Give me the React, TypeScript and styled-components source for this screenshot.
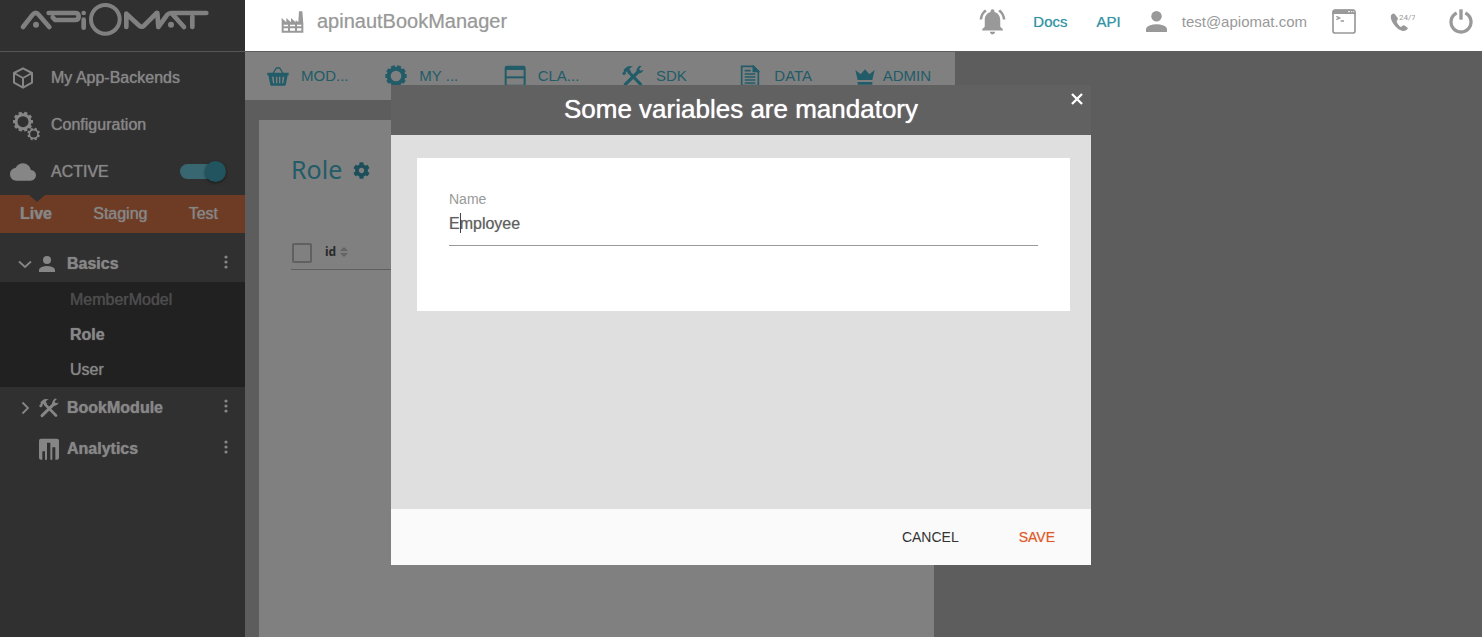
import React from "react";
import styled, { createGlobalStyle } from "styled-components";
import { MdCloud, MdNotificationsActive } from "react-icons/md";
import { FaCog } from "react-icons/fa";

const sans = `"Liberation Sans", Arial, sans-serif`;
const teal = "#225c68";

const GlobalStyle = createGlobalStyle`
  * { box-sizing: border-box; }
  body { margin: 0; background: #5d5d5d; font-family: ${sans}; }
  button, input { font-family: inherit; margin: 0; }
  a { color: inherit; text-decoration: none; }
  svg { display: block; flex: none; }
`;

/* ---------- icons ---------- */

const Logo = () => (
  <svg width="250" height="50" viewBox="0 0 750 150" fill="none" stroke="#808080" strokeWidth="14" strokeLinecap="round" strokeLinejoin="round" role="img" aria-label="ApiOmat">
    <path d="M69 81L98 44Q107 33 116 44L148 81" />
    <path d="M146 39H226Q236 39 236 49Q236 60 226 60H166L158 52" />
    <path d="M251 59V83" />
    <circle cx="251" cy="39" r="7" fill="#808080" stroke="none" />
    <circle cx="316" cy="58" r="43" strokeWidth="12" />
    <path d="M379 81V41L418 77Q425 83 432 77L470 39" />
    <path d="M472 39L475 81L502 44Q506 39 514 39H619" />
    <path d="M516 41L552 81M577 50V81" />
    <circle cx="108" cy="74" r="9" fill="#808080" stroke="none" />
    <circle cx="513" cy="74" r="9" fill="#808080" stroke="none" />
  </svg>
);

const CubeIcon = () => (
  <svg width="22" height="22" viewBox="0 0 66 66" fill="none" stroke="currentColor" strokeWidth="6" strokeLinejoin="round">
    <path d="M33 4L60 18V47L33 62L6 47V18ZM6 18L33 33L60 18M33 33V62" />
  </svg>
);

const teeth = (cx: number, cy: number, r: number, size: number, count: number) =>
  Array.from({ length: count }, (_, i) => (
    <rect
      key={i}
      x={cx - size / 2}
      y={cy - r}
      width={size}
      height={size}
      rx="1"
      fill="currentColor"
      stroke="none"
      transform={`rotate(${(360 / count) * (i + 0.5)} ${cx} ${cy})`}
    />
  ));

const GearsIcon = () => (
  <svg width="28" height="30" viewBox="0 0 84 90" fill="none" stroke="currentColor" overflow="visible">
    <circle cx="42" cy="35" r="21" strokeWidth="9" />
    {teeth(42, 35, 30, 10, 10)}
    <circle cx="74" cy="72" r="13" strokeWidth="5" />
    {teeth(74, 72, 19, 7, 8)}
  </svg>
);

const GearIcon = () => (
  <svg width="22" height="22" viewBox="0 0 66 66" fill="none" stroke="currentColor">
    <circle cx="33" cy="33" r="22" strokeWidth="12" />
    {teeth(33, 33, 32, 12, 10)}
  </svg>
);

const ToolsIcon = ({ size }: { size: number }) => (
  <svg width={size} height={size} viewBox="0 0 66 66" fill="none" stroke="currentColor">
    <path d="M0 26L6 31L12 26L11 22L15 19L22 24L27 19L22 13Q25 6 33 5Q20 0 11 8L5 14L6 19Z" fill="currentColor" stroke="none" />
    <path d="M20 21L56 58" strokeWidth="9" strokeLinecap="round" />
    <path d="M10 58L48 21" strokeWidth="10" strokeLinecap="round" />
    <path d="M52 2L46 9Q41 17 44 23Q52 28 60 22L65 15L56 17L51 12L59 3Z" fill="currentColor" stroke="none" />
  </svg>
);

const PersonIcon = ({ size }: { size: number }) => (
  <svg width={size} height={size} viewBox="0 0 48 48" fill="currentColor">
    <circle cx="24" cy="12" r="12" />
    <path d="M0 48V42Q0 36 8 33Q24 27 40 33Q48 36 48 42V48Z" />
  </svg>
);

const ChevronIcon = ({ open }: { open?: boolean }) => (
  <svg width="16" height="16" viewBox="0 0 16 16" fill="none" stroke="currentColor" strokeWidth="1.8">
    <path d={open ? "M2 5.5L8 11L14 5.5" : "M5.5 2.5L11 8L5.5 13.5"} />
  </svg>
);

const ChartIcon = () => (
  <svg width="20" height="22" viewBox="0 0 60 66">
    <path fill="currentColor" fillRule="evenodd" d="M6 2H54Q60 2 60 8V59Q60 65 54 65H49V28H40V65H34V14H24V65H18V40H10V65H6Q0 65 0 59V8Q0 2 6 2Z" />
  </svg>
);

const DotsIcon = () => (
  <svg width="4" height="14" viewBox="0 0 4 14" fill="currentColor">
    <circle cx="2" cy="2" r="1.6" />
    <circle cx="2" cy="7" r="1.6" />
    <circle cx="2" cy="12" r="1.6" />
  </svg>
);

const FactoryIcon = () => (
  <svg width="23" height="22" viewBox="0 0 69 66">
    <path fill="currentColor" fillRule="evenodd" d="M2 65V21L16 34V21L30 34V21L44 34V28L52 33L54 1H64L67 38V65ZM8 41V46H21V41ZM27 41V46H42V41ZM48 41V46H61V41ZM8 52V59H21V52ZM27 52V59H42V52ZM48 52V59H61V52Z" />
  </svg>
);

const BasketIcon = () => (
  <svg width="22" height="20" viewBox="0 0 66 60" fill="none" stroke="currentColor">
    <path d="M17 24L28 6H38L49 24" strokeWidth="4" />
    <path fill="currentColor" stroke="none" fillRule="evenodd" d="M1 20H65V28H62L56 57Q55 59 53 59H13Q11 59 10 57L4 28H1ZM15 32L18 52H22L20 32ZM27 32V52H31V32ZM36 32V52H40V32ZM47 32L45 52H49L52 32Z" />
  </svg>
);

const ClassIcon = () => (
  <svg width="22" height="22" viewBox="0 0 66 66" fill="none" stroke="currentColor" strokeWidth="6">
    <rect x="5" y="5" width="57" height="57" rx="4" />
    <path d="M5 37H62" />
    <path d="M5 10H62" strokeWidth="10" />
  </svg>
);

const DocIcon = () => (
  <svg width="20" height="22" viewBox="0 0 60 66" fill="none" stroke="currentColor" strokeWidth="5">
    <path d="M5 4H40L55 19V62H5ZM14 17H32M14 27H46M14 36H46M14 45H46M14 54H46" />
    <path d="M40 4L55 19H40Z" fill="currentColor" />
  </svg>
);

const CrownIcon = () => (
  <svg width="20" height="20" viewBox="0 0 60 60" fill="currentColor">
    <path d="M8 42L1 12L17 25L30 10L43 25L59 12L52 42ZM8 48H52V56H8Z" />
  </svg>
);

const TerminalIcon = () => (
  <svg width="24" height="26" viewBox="0 0 72 78" fill="none" stroke="currentColor">
    <rect x="3" y="4" width="66" height="68" rx="7" strokeWidth="5" />
    <path d="M1 10Q1 1 10 1H62Q71 1 71 10V15H1Z" fill="currentColor" stroke="none" />
    <path d="M48 8H54M57 8H61M64 8H67" stroke="#fff" strokeWidth="3" />
    <path d="M13 22L23 27L13 32M26 36H36" strokeWidth="4" />
  </svg>
);

const PhoneIcon = () => (
  <svg width="25" height="22" viewBox="0 0 75 66" fill="currentColor">
    <path d="M8 8L3 13Q0 22 9 37Q22 57 38 60Q46 61 53 54Q54 51 51 49L42 43Q39 42 37 45L33 48Q28 46 24 40Q20 34 20 30L23 26Q25 24 23 21L14 9Q11 6 8 8Z" />
    <text x="27" y="26" fontFamily="Roboto, sans-serif" fontSize="24">24/7</text>
  </svg>
);

const PowerIcon = () => (
  <svg width="24" height="26" viewBox="0 0 72 78" fill="none" stroke="currentColor" strokeWidth="10">
    <path d="M23 12A30 30 0 1 0 49 12" />
    <path d="M36 1V32" />
  </svg>
);

const CloseIcon = () => (
  <svg width="12" height="12" viewBox="0 0 12 12" stroke="currentColor" strokeWidth="2.4">
    <path d="M1 1L11 11M11 1L1 11" />
  </svg>
);

const SortIcon = () => (
  <svg width="8" height="10" viewBox="0 0 8 10" fill="currentColor">
    <path d="M4 0L8 4H0ZM4 10L0 6H8Z" />
  </svg>
);

/* ---------- frame ---------- */

const Page = styled.div`
  display: grid;
  grid-template-columns: 245px minmax(0, 1fr);
  min-height: 100vh;
`;

const Sidebar = styled.aside`
  background: #303030;
  color: #868686;
  font-size: 16px;
`;

const Brand = styled.a`
  display: block;
  height: 52px;
  border-bottom: 1px solid #565656;
`;

const MainMenu = styled.div`
  padding-top: 2px;
`;

const MenuRow = styled.div`
  display: grid;
  grid-template-columns: 42px 1fr auto;
  align-items: center;
  height: 47px;
  padding: 0 19px 0 9px;
  text-shadow: 0 0 1px currentColor;
`;

const IconSlot = styled.span`
  display: flex;
  align-items: center;
  justify-content: center;
  width: 28px;
`;

const Toggle = styled.input`
  appearance: none;
  position: relative;
  width: 46px;
  height: 21px;
  padding: 0;

  &::before {
    content: "";
    position: absolute;
    inset: 3px 4px 3px 0;
    border-radius: 8px;
    background: #396771;
  }
  &::after {
    content: "";
    position: absolute;
    top: 0;
    right: 0;
    width: 21px;
    height: 21px;
    border-radius: 50%;
    background: #21545f;
    box-shadow: 0 1px 3px rgba(0, 0, 0, 0.5);
  }
`;

const EnvBar = styled.nav`
  position: relative;
  display: flex;
  align-items: center;
  justify-content: space-between;
  height: 38px;
  padding: 0 27px 0 20px;
  background: #6e3c24;

  &::before {
    content: "";
    position: absolute;
    top: 0;
    left: 29px;
    border: 8px solid transparent;
    border-top: 7px solid #303030;
    border-bottom: 0;
  }
`;

const EnvLink = styled.a<{ $active?: boolean }>`
  font-weight: ${(p) => (p.$active ? 700 : 400)};
  text-shadow: 0 0 1px currentColor;
`;

const Tree = styled.nav`
  padding-top: 13px;
`;

const TreeRow = styled.div<{ $height: number }>`
  display: grid;
  grid-template-columns: 22px 28px 1fr auto;
  align-items: center;
  height: ${(p) => p.$height}px;
  padding: 0 17px;
  font-weight: 700;
  text-shadow: 0 0 1px currentColor;
`;

const PlainButton = styled.button`
  display: flex;
  padding: 0;
  border: 0;
  background: none;
  color: inherit;
`;

const MoreButton = styled(PlainButton)`
  padding: 0 0 4px;
`;

const SubList = styled.ul`
  margin: 0;
  padding: 0;
  list-style: none;
  background: #212121;
`;

const SubItem = styled.li<{ $tone?: "muted" | "current" }>`
  height: 35px;
  padding-left: 70px;
  line-height: 35px;
  color: ${(p) => (p.$tone === "muted" ? "#4d4d4d" : "#868686")};
  font-weight: ${(p) => (p.$tone === "current" ? 700 : 400)};
  text-shadow: 0 0 1px currentColor;
`;

/* ---------- top bar ---------- */

const TopBar = styled.header`
  display: flex;
  align-items: center;
  justify-content: space-between;
  height: 51px;
  padding: 0 9px 8px 36px;
  background: #fff;
  color: #999;
`;

const AppName = styled.div`
  display: flex;
  align-items: center;
  gap: 13px;
  font-size: 20px;
  text-shadow: 0 0 1px #ccc;
`;

const Cluster = styled.div<{ $gap: number }>`
  display: flex;
  align-items: center;
  gap: ${(p) => p.$gap}px;
  font-size: 15px;
`;

const TopLink = styled.a`
  color: #3492a3;
  text-shadow: 0 0 1px #8cc2cc;
`;

/* ---------- content ---------- */

const Tabs = styled.nav`
  display: grid;
  grid-template-columns: repeat(6, 1fr);
  width: 710px;
  max-width: 100%;
  height: 48px;
  margin-top: 1px;
  background: #808080;
`;

const Tab = styled.a<{ $tight?: boolean }>`
  display: flex;
  align-items: center;
  gap: ${(p) => (p.$tight ? 8 : 12)}px;
  padding: 0 0 1px ${(p) => (p.$tight ? 18 : 22)}px;
  color: ${teal};
  font-size: 15px;
  white-space: nowrap;
`;

const TabIcon = styled.span<{ $tight?: boolean }>`
  width: ${(p) => (p.$tight ? 20 : 22)}px;
`;

const Card = styled.section`
  flex: 1;
  width: 675px;
  max-width: calc(100% - 28px);
  margin: 20px 14px 0;
  padding: 32px 0 0 32px;
  background: #808080;
`;

const Content = styled.main`
  display: flex;
  flex-direction: column;
`;

const CardTitle = styled.h1`
  display: flex;
  align-items: center;
  gap: 11px;
  margin: 0;
  color: ${teal};
  font: 400 25px/34px "Noto Sans", "Open Sans", sans-serif;
`;

const TitleButton = styled(PlainButton)`
  padding-top: 2px;
  color: #1d4f5a;
`;

const DataTable = styled.table`
  width: 100%;
  margin-top: 52px;
  border-collapse: collapse;

  th {
    height: 31px;
    padding: 0;
    border-bottom: 1px solid #5f5f5f;
    text-align: left;
    vertical-align: middle;
  }
  th:first-child {
    width: 34px;
  }
`;

const Check = styled.input`
  appearance: none;
  display: block;
  width: 20px;
  height: 20px;
  margin: 0 0 0 1px;
  border: 2px solid #606060;
  border-radius: 2px;
`;

const SortLabel = styled.button`
  display: flex;
  align-items: center;
  gap: 4px;
  padding: 0 0 3px;
  border: 0;
  background: none;
  color: #2a2a2a;
  font: 700 12px/16px "Noto Sans", "Open Sans", sans-serif;

  svg {
    color: #646464;
  }
`;

/* ---------- dialog ---------- */

const Overlay = styled.div`
  position: fixed;
  inset: 0;
  display: flex;
  align-items: flex-start;
  justify-content: center;
  padding-top: 85px;
`;

const Dialog = styled.div`
  display: flex;
  flex-direction: column;
  width: 700px;
  max-width: 100%;
  min-height: 480px;
  background: #dfdfdf;
`;

const DialogHeader = styled.header`
  position: relative;
  height: 50px;
  background: #616161;
  color: #fff;
`;

const DialogTitle = styled.h2`
  margin: 0;
  font-size: 26px;
  font-weight: 400;
  line-height: 49px;
  text-align: center;
  text-shadow: 0 0 1px #fff;
`;

const CloseButton = styled(PlainButton)`
  position: absolute;
  top: 8px;
  right: 8px;
`;

const DialogBody = styled.div`
  flex: 1;
  padding: 23px 21px 23px 26px;
`;

const FormPanel = styled.form`
  min-height: 153px;
  padding: 32px;
  background: #fff;
`;

const Field = styled.div`
  position: relative;
  display: flex;
  flex-direction: column;
`;

const FieldLabel = styled.label`
  color: #999;
  font-size: 14px;
  line-height: 18px;
`;

const TextInput = styled.input`
  width: 100%;
  height: 38px;
  padding: 0 0 5px;
  border: 0;
  border-bottom: 1px solid #999;
  outline: 0;
  background: none;
  color: #606060;
  font-size: 16px;
  text-shadow: 0 0 1px #aaa;
`;

const Caret = styled.span`
  position: absolute;
  top: 23px;
  left: 11px;
  width: 1px;
  height: 20px;
  background: #444;
`;

const DialogFooter = styled.footer`
  display: flex;
  align-items: center;
  justify-content: flex-end;
  gap: 60px;
  height: 56px;
  padding: 0 36px;
  background: #fafafa;
`;

const ActionButton = styled.button<{ $primary?: boolean }>`
  padding: 0;
  border: 0;
  background: none;
  color: ${(p) => (p.$primary ? "#dd5a2b" : "#333")};
  font-size: 14px;
  text-shadow: ${(p) => (p.$primary ? "0 0 1px #f0b49c" : "none")};
`;

const tabs = [
  { label: "MOD...", icon: <BasketIcon /> },
  { label: "MY ...", icon: <GearIcon /> },
  { label: "CLA...", icon: <ClassIcon /> },
  { label: "SDK", icon: <ToolsIcon size={22} /> },
  { label: "DATA", icon: <DocIcon /> },
  { label: "ADMIN", icon: <CrownIcon />, tight: true },
];

export default function App() {
  return (
    <>
      <GlobalStyle />
      <Page>
        <Sidebar>
          <Brand href="#"><Logo /></Brand>
          <MainMenu>
            <MenuRow><IconSlot><CubeIcon /></IconSlot><a href="#backends">My App-Backends</a></MenuRow>
            <MenuRow><IconSlot><GearsIcon /></IconSlot><a href="#configuration">Configuration</a></MenuRow>
            <MenuRow>
              <IconSlot><MdCloud size={26} /></IconSlot>
              <label htmlFor="active">ACTIVE</label>
              <Toggle id="active" type="checkbox" defaultChecked />
            </MenuRow>
          </MainMenu>
          <EnvBar>
            <EnvLink href="#live" $active>Live</EnvLink>
            <EnvLink href="#staging">Staging</EnvLink>
            <EnvLink href="#test">Test</EnvLink>
          </EnvBar>
          <Tree>
            <TreeRow $height={36}>
              <ChevronIcon open />
              <PersonIcon size={16} />
              <a href="#basics">Basics</a>
              <MoreButton aria-label="Basics options"><DotsIcon /></MoreButton>
            </TreeRow>
            <SubList>
              <SubItem $tone="muted"><a href="#member">MemberModel</a></SubItem>
              <SubItem $tone="current"><a href="#role">Role</a></SubItem>
              <SubItem><a href="#user">User</a></SubItem>
            </SubList>
            <TreeRow $height={41}>
              <ChevronIcon />
              <ToolsIcon size={20} />
              <a href="#book">BookModule</a>
              <MoreButton aria-label="BookModule options"><DotsIcon /></MoreButton>
            </TreeRow>
            <TreeRow $height={41}>
              <span />
              <ChartIcon />
              <a href="#analytics">Analytics</a>
              <MoreButton aria-label="Analytics options"><DotsIcon /></MoreButton>
            </TreeRow>
          </Tree>
        </Sidebar>
        <Content>
          <TopBar>
            <AppName><FactoryIcon />apinautBookManager</AppName>
            <Cluster $gap={25}>
              <PlainButton aria-label="Notifications"><MdNotificationsActive size={31} /></PlainButton>
              <Cluster $gap={29}>
                <TopLink href="#docs">Docs</TopLink>
                <TopLink href="#api">API</TopLink>
              </Cluster>
              <Cluster $gap={15}><PersonIcon size={21} />test@apiomat.com</Cluster>
              <Cluster $gap={34}>
                <PlainButton aria-label="Console"><TerminalIcon /></PlainButton>
                <PlainButton aria-label="Support"><PhoneIcon /></PlainButton>
                <PlainButton aria-label="Log out"><PowerIcon /></PlainButton>
              </Cluster>
            </Cluster>
          </TopBar>
          <Tabs>
            {tabs.map((t) => (
              <Tab key={t.label} href="#tab" $tight={t.tight}>
                <TabIcon $tight={t.tight}>{t.icon}</TabIcon>
                {t.label}
              </Tab>
            ))}
          </Tabs>
          <Card>
            <CardTitle>
              Role
              <TitleButton aria-label="Class settings"><FaCog size={17} /></TitleButton>
            </CardTitle>
            <DataTable>
              <thead>
                <tr>
                  <th><Check type="checkbox" aria-label="Select all" /></th>
                  <th><SortLabel>id<SortIcon /></SortLabel></th>
                </tr>
              </thead>
            </DataTable>
          </Card>
        </Content>
      </Page>
      <Overlay>
        <Dialog role="dialog" aria-modal="true" aria-labelledby="dialog-title">
          <DialogHeader>
            <DialogTitle id="dialog-title">Some variables are mandatory</DialogTitle>
            <CloseButton aria-label="Close"><CloseIcon /></CloseButton>
          </DialogHeader>
          <DialogBody>
            <FormPanel>
              <Field>
                <FieldLabel htmlFor="name">Name</FieldLabel>
                <TextInput id="name" type="text" defaultValue="Employee" />
                <Caret />
              </Field>
            </FormPanel>
          </DialogBody>
          <DialogFooter>
            <ActionButton type="button">CANCEL</ActionButton>
            <ActionButton type="button" $primary>SAVE</ActionButton>
          </DialogFooter>
        </Dialog>
      </Overlay>
    </>
  );
}
